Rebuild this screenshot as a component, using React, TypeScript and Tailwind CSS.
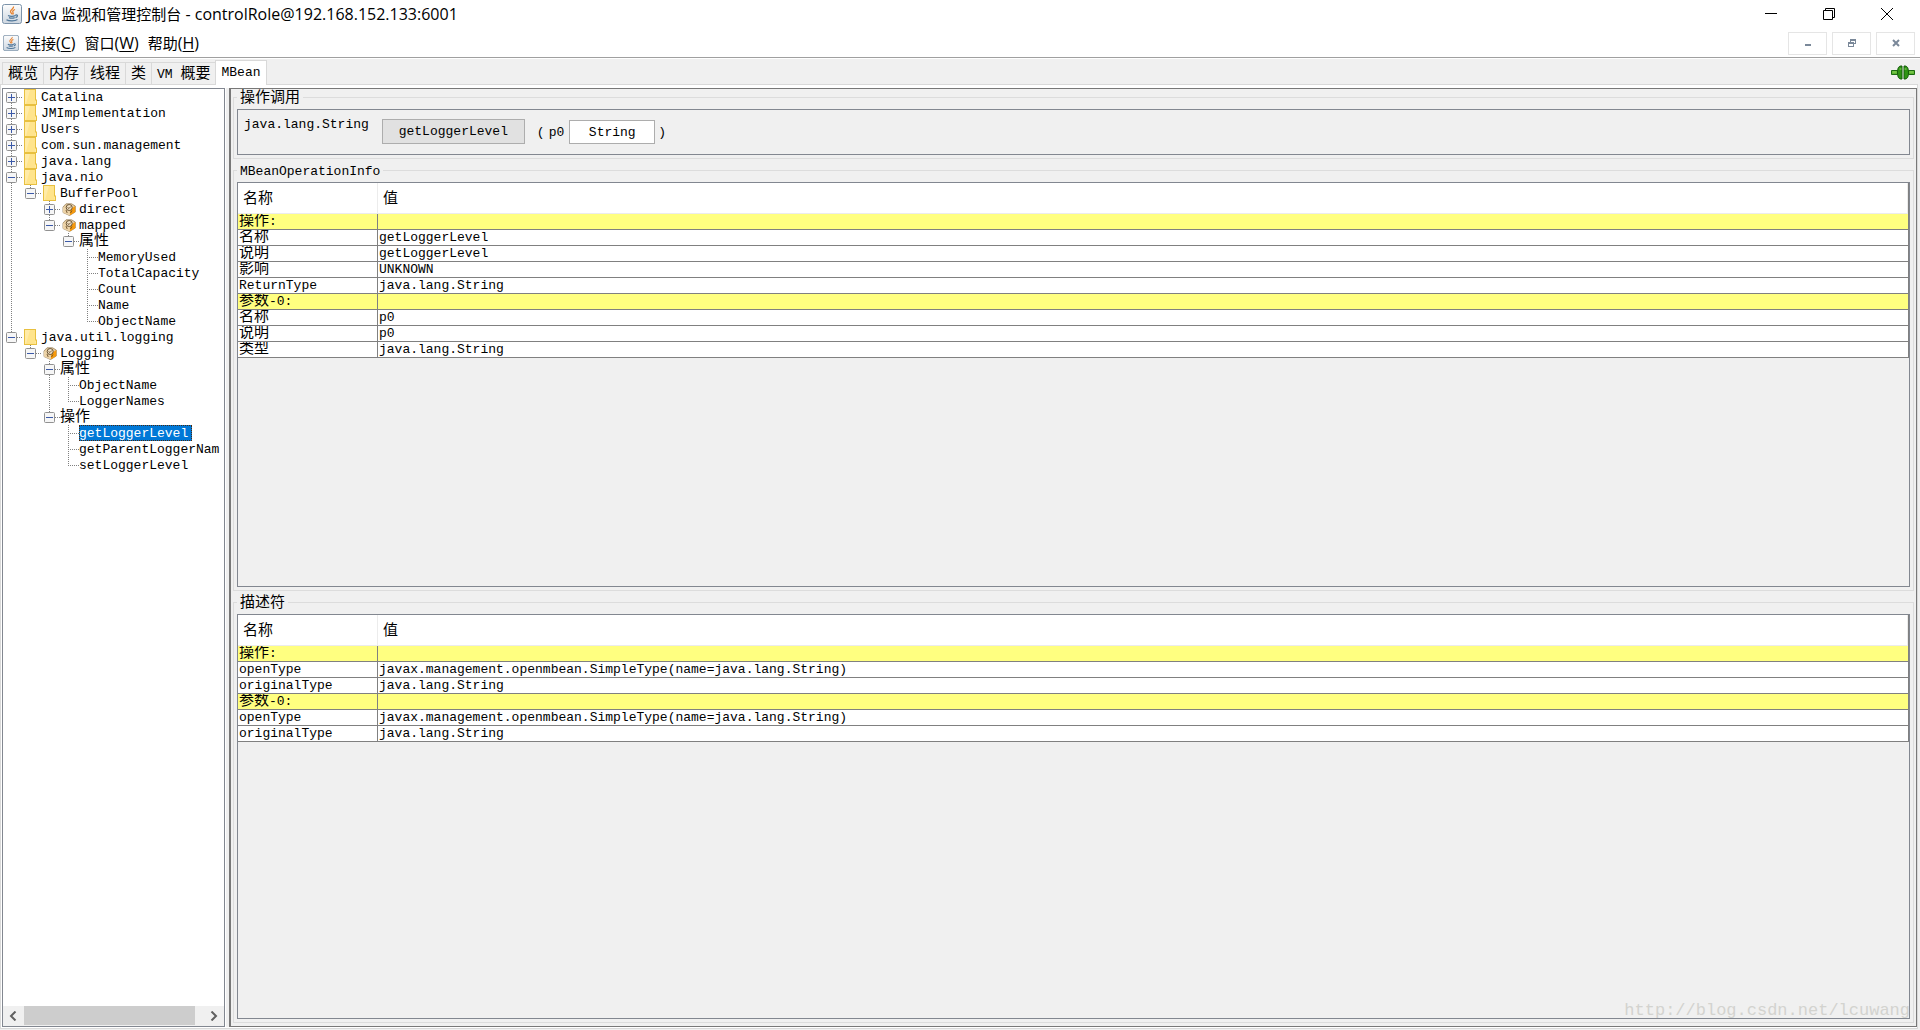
import { useState } from "react";
import { clsx } from "clsx";

type Kind = "folder" | "bean" | "plain";

interface TreeNode {
  id: string;
  label: string;
  kind?: Kind;
  children?: TreeNode[];
}

interface FlatNode {
  node: TreeNode;
  guides: boolean[];
  first: boolean;
  last: boolean;
}

interface Row { name: string; value?: string; heading?: boolean }

const MONO = "font-['Liberation_Mono','Noto_Sans_CJK_SC',monospace]";
const UI = "font-['Open_Sans','Noto_Sans_CJK_SC',sans-serif]";

const TREE: TreeNode[] = [
  { id: "catalina", label: "Catalina", kind: "folder", children: [] },
  { id: "jmi", label: "JMImplementation", kind: "folder", children: [] },
  { id: "users", label: "Users", kind: "folder", children: [] },
  { id: "mgmt", label: "com.sun.management", kind: "folder", children: [] },
  { id: "lang", label: "java.lang", kind: "folder", children: [] },
  {
    id: "nio", label: "java.nio", kind: "folder", children: [
      {
        id: "pool", label: "BufferPool", kind: "folder", children: [
          { id: "direct", label: "direct", kind: "bean", children: [] },
          {
            id: "mapped", label: "mapped", kind: "bean", children: [
              {
                id: "mapped-attrs", label: "属性", children: [
                  { id: "m1", label: "MemoryUsed" },
                  { id: "m2", label: "TotalCapacity" },
                  { id: "m3", label: "Count" },
                  { id: "m4", label: "Name" },
                  { id: "m5", label: "ObjectName" },
                ],
              },
            ],
          },
        ],
      },
    ],
  },
  {
    id: "jul", label: "java.util.logging", kind: "folder", children: [
      {
        id: "logging", label: "Logging", kind: "bean", children: [
          {
            id: "log-attrs", label: "属性", children: [
              { id: "l1", label: "ObjectName" },
              { id: "l2", label: "LoggerNames" },
            ],
          },
          {
            id: "log-ops", label: "操作", children: [
              { id: "getLevel", label: "getLoggerLevel" },
              { id: "getParent", label: "getParentLoggerNam" },
              { id: "setLevel", label: "setLoggerLevel" },
            ],
          },
        ],
      },
    ],
  },
];

const OPEN = ["nio", "pool", "mapped", "mapped-attrs", "jul", "logging", "log-attrs", "log-ops"];

const OPERATION_ROWS: Row[] = [
  { name: "操作:", heading: true },
  { name: "名称", value: "getLoggerLevel" },
  { name: "说明", value: "getLoggerLevel" },
  { name: "影响", value: "UNKNOWN" },
  { name: "ReturnType", value: "java.lang.String" },
  { name: "参数-0:", heading: true },
  { name: "名称", value: "p0" },
  { name: "说明", value: "p0" },
  { name: "类型", value: "java.lang.String" },
];

const DESCRIPTOR_ROWS: Row[] = [
  { name: "操作:", heading: true },
  { name: "openType", value: "javax.management.openmbean.SimpleType(name=java.lang.String)" },
  { name: "originalType", value: "java.lang.String" },
  { name: "参数-0:", heading: true },
  { name: "openType", value: "javax.management.openmbean.SimpleType(name=java.lang.String)" },
  { name: "originalType", value: "java.lang.String" },
];

const TABS = ["概览", "内存", "线程", "类", "VM 概要", "MBean"];
const MENUS = [
  { label: "连接", key: "C" },
  { label: "窗口", key: "W" },
  { label: "帮助", key: "H" },
];

function flatten(nodes: TreeNode[], open: string[], guides: boolean[] = []): FlatNode[] {
  return nodes.flatMap((node, i) => {
    const last = i === nodes.length - 1;
    const self = { node, guides, first: i === 0 && guides.length === 0, last };
    const below = node.children && open.includes(node.id) ? flatten(node.children, open, [...guides, !last]) : [];
    return [self, ...below];
  });
}

// Han characters are drawn larger than the Latin ones next to them
function Mixed({ text }: { text: string }) {
  return (
    <>
      {text.split(/([\u4e00-\u9fff]+)/).filter(Boolean).map((part, i) => (
        <span key={i} className={/[\u4e00-\u9fff]/.test(part) ? "text-[15px]" : "text-[13px]"}>{part}</span>
      ))}
    </>
  );
}

function JavaIcon({ size }: { size: number }) {
  return (
    <svg width={size} height={size} viewBox="0 0 20 20" className="shrink-0" aria-hidden="true">
      <defs>
        <linearGradient id={`java${size}`} x1="0" y1="0" x2="0" y2="1">
          <stop offset="0" stopColor="#fdfdfd" />
          <stop offset="1" stopColor="#cdd6e0" />
        </linearGradient>
      </defs>
      <rect x="0.5" y="0.5" width="19" height="19" rx="2" fill={`url(#java${size})`} stroke="#7c93aa" />
      <path d="M11.500 2.500c.8 2-3 3-3 5 0 1.200 1.200 1.800 1.500 2.800M13 5.500c-2 .8-2.800 1.800-2 3 .5.800.2 1.400-.4 1.900" fill="none" stroke="#e8812c" strokeWidth="1.300" />
      <path d="M6 11.500c2 .9 5.500.9 7.500 0M7 13.600c1.700.7 4 .7 5.700 0M13.500 11c2.600-.6 2.600 2 0 2.600M4.500 15.700c2.500 1.600 8.500 1.600 11-.2" fill="none" stroke="#4f7699" strokeWidth="1.300" />
    </svg>
  );
}

function FolderIcon() {
  return (
    <svg width="13" height="16" viewBox="0 0 13 16" aria-hidden="true">
      <path d="M0 0h12v10.500h1V16H0z" fill="#e8c040" />
      <path d="M1 1h10v14H1z" fill="#ffe48c" />
      <path d="M1 1h5L2 15H1z" fill="#ffeba8" />
      <path d="M11 11.500h1V15h-1z" fill="#ffe9a0" />
    </svg>
  );
}

function BeanIcon() {
  return (
    <svg width="14" height="13" viewBox="0 0 14 13" aria-hidden="true">
      <path d="M4 .8h5.500L13.300 3v6L7.500 12.500 1 9.500V4z" fill="#e9cfa2" stroke="#9b8565" strokeWidth=".8" />
      <path d="M8 6.500L13.300 3v6L8 12.300z" fill="#f79a0c" />
      <path d="M1 4l6 3v5.200L1 9.500z" fill="#ecd3a8" />
      <circle cx="7.200" cy="4.500" r="3" fill="#efe0c6" stroke="#5c4627" strokeWidth=".9" />
      <path d="M5.500 4.500l1.500 1 1.800-2M4 7l1.200 3M10 7.500L8.500 10" fill="none" stroke="#6d5028" strokeWidth=".9" />
    </svg>
  );
}

function Guide({ up, down, across }: { up?: boolean; down?: boolean; across?: boolean }) {
  return (
    <svg width="19" height="16" className="shrink-0" aria-hidden="true">
      <g stroke="#808080" strokeDasharray="1 1" shapeRendering="crispEdges">
        {up && <path d="M8.500 0v8" />}
        {down && <path d="M8.500 8v8" />}
        {across && <path d="M8 8.500h11" />}
      </g>
    </svg>
  );
}

function Expander({ open }: { open: boolean }) {
  return (
    <svg width="11" height="11" viewBox="0 0 11 11" aria-hidden="true">
      <rect x=".5" y=".5" width="10" height="10" rx="1" fill="#f6f6f6" stroke="#919191" />
      <path d={open ? "M2 5.500h7" : "M2 5.500h7M5.500 2v7"} stroke="#3c5aa8" shapeRendering="crispEdges" />
    </svg>
  );
}

function MBeanTree() {
  const [open, setOpen] = useState<string[]>(OPEN);
  const [selected, setSelected] = useState("getLevel");

  function toggle(id: string) {
    setOpen((prev) => (prev.includes(id) ? prev.filter((o) => o !== id) : [...prev, id]));
  }

  return (
    <div className="flex w-[223px] shrink-0 flex-col border border-[#828790] bg-white">
      <ul className="min-h-0 flex-1 overflow-hidden">
        {flatten(TREE, open).map(({ node, guides, first, last }) => (
          <li key={node.id} className="flex h-4 items-center whitespace-nowrap">
            {guides.map((line, i) => <Guide key={i} up={line} down={line} />)}
            <span className="relative h-4 w-[19px] shrink-0">
              <Guide up={!first} down={!last} across />
              {node.children && (
                <button
                  onClick={() => toggle(node.id)}
                  aria-label={node.label}
                  className="absolute top-[3px] left-[3px]"
                >
                  <Expander open={open.includes(node.id)} />
                </button>
              )}
            </span>
            {node.kind && (
              <span className="flex w-[19px] shrink-0 items-center pl-[2px]">
                {node.kind === "folder" ? <FolderIcon /> : <BeanIcon />}
              </span>
            )}
            <button
              onClick={() => setSelected(node.id)}
              className={clsx(
                "flex h-4 items-center pt-[2px] pr-1 leading-4",
                selected === node.id && "bg-[#0078d7] text-white outline-1 -outline-offset-1 outline-dotted outline-[#4a2a10]",
              )}
            >
              <Mixed text={node.label} />
            </button>
          </li>
        ))}
      </ul>
      <div className="flex h-5 shrink-0 bg-[#f0f0f0]">
        <button aria-label="向左滚动" className="flex w-[21px] items-center justify-center pr-[2px]">
          <svg width="8" height="10" viewBox="0 0 8 10"><path d="M6.500 .5L2 5l4.500 4.500" fill="none" stroke="#606060" strokeWidth="2" /></svg>
        </button>
        <div className="flex-1 pr-[8px]"><div className="h-[19px] bg-[#cdcdcd]" /></div>
        <button aria-label="向右滚动" className="flex w-[21px] items-center justify-center">
          <svg width="8" height="10" viewBox="0 0 8 10"><path d="M1.500 .5L6 5 1.500 9.500" fill="none" stroke="#606060" strokeWidth="2" /></svg>
        </button>
      </div>
    </div>
  );
}

function Titled({ title, grow, children }: { title: string; grow?: boolean; children: React.ReactNode }) {
  return (
    <fieldset className={clsx("flex min-h-0 min-w-0 flex-col border border-[#dcdcdc] px-[3px] pt-1 pb-[3px]", grow && "flex-1")}>
      <legend className="px-[3px]">
        <span className="flex h-4 items-center pt-1 leading-4"><Mixed text={title} /></span>
      </legend>
      {children}
    </fieldset>
  );
}

function InfoTable({ rows }: { rows: Row[] }) {
  return (
    <div className="min-h-0 flex-1 overflow-hidden border border-[#828790]">
      <table className="w-full table-fixed border-separate border-spacing-0 border-r border-[#808080] bg-white">
        <thead>
          <tr className="h-[31px] text-left text-[15px] leading-4">
            <th className="w-[140px] border-r border-b border-[#ececec] px-[5px] pt-1 pb-0 font-normal">名称</th>
            <th className="border-r border-b border-[#ececec] px-[5px] pt-1 pb-0 font-normal">值</th>
          </tr>
        </thead>
        <tbody>
          {rows.map((row, i) => (
            <tr key={i} className={clsx("h-4", row.heading && "bg-[#ffff80]")}>
              <td className="border-r border-b border-[#808080] p-0">
                <div className="flex h-[15px] items-center overflow-hidden pl-px leading-[15px]"><Mixed text={row.name} /></div>
              </td>
              <td className="border-b border-[#808080] p-0">
                <div className="flex h-[15px] items-center overflow-hidden pl-px leading-[15px]"><Mixed text={row.value ?? ""} /></div>
              </td>
            </tr>
          ))}
        </tbody>
      </table>
    </div>
  );
}

export default function App() {
  const [tab, setTab] = useState("MBean");
  const [param, setParam] = useState("String");

  return (
    <div className={clsx("relative flex h-screen flex-col overflow-hidden bg-[#f0f0f0] text-black", MONO)}>
      {/* Title bar */}
      <header className={clsx("flex h-[29px] shrink-0 items-center bg-white pb-[2px] pl-[2px] pr-1", UI)}>
        <JavaIcon size={20} />
        <h1 className="ml-[5px] flex-1 text-[16px] leading-5">
          Java <span className="text-[15px]">监视和管理控制台</span> - controlRole@192.168.152.133:6001
        </h1>
        <button aria-label="最小化" className="flex h-full w-[58px] items-center justify-center">
          <svg width="12" height="12"><path d="M0 5.500h12" stroke="#000" /></svg>
        </button>
        <button aria-label="还原" className="flex h-full w-[58px] items-center justify-center">
          <svg width="12" height="12" fill="none" stroke="#000"><path d="M.5 2.500h9v9h-9zM2.500 2.500v-2h9v9h-2" /></svg>
        </button>
        <button aria-label="关闭" className="flex h-full w-[58px] items-center justify-center">
          <svg width="12" height="12" stroke="#000"><path d="M0 0l12 12M12 0L0 12" /></svg>
        </button>
      </header>

      {/* Menu bar */}
      <div className={clsx("flex h-[29px] shrink-0 items-center border-b border-[#a0a0a0] bg-white pl-[3px] pr-[5px]", UI)}>
        <JavaIcon size={16} />
        <nav className="ml-[7px] flex flex-1 gap-[9px] text-[16px] leading-5">
          {MENUS.map((m) => (
            <button key={m.key}><span className="text-[15px]">{m.label}</span>(<u className="underline-offset-2">{m.key}</u>)</button>
          ))}
        </nav>
        <div className="flex gap-[5px]">
          <button aria-label="最小化窗口" className="flex h-[23px] w-[39px] items-center justify-center border border-[#e5e5e5]">
            <svg width="8" height="8"><path d="M1 5h6v2H1z" fill="#7a8899" /></svg>
          </button>
          <button aria-label="还原窗口" className="flex h-[23px] w-[39px] items-center justify-center border border-[#e5e5e5]">
            <svg width="8" height="8"><path d="M2 0h6v5H6V4h1V2H3v1H2zM0 3h6v5H0zM1 5v2h4V5z" fill="#7a8899" fillRule="evenodd" /></svg>
          </button>
          <button aria-label="关闭窗口" className="flex h-[23px] w-[39px] items-center justify-center border border-[#e5e5e5]">
            <svg width="8" height="8"><path d="M1 1l6 6M7 1L1 7" stroke="#7a8899" strokeWidth="2" /></svg>
          </button>
        </div>
      </div>

      {/* Tabs */}
      <div className="flex h-[26px] shrink-0 items-end border-t border-white pr-[5px] pl-[2px]">
        {TABS.map((t) => (
          <button
            key={t}
            onClick={() => setTab(t)}
            className={clsx(
              "flex items-center whitespace-pre border-t border-l border-[#d9d9d9] leading-4",
              tab === t ? "relative z-10 -mb-px h-[25px] border-r bg-white px-[5px]" : "h-[22px] px-[5px] pt-[2px]",
            )}
          >
            <Mixed text={t} />
          </button>
        ))}
        <svg width="24" height="15" viewBox="0 0 24 15" className="mb-1 ml-auto" aria-hidden="true">
          <path d="M.5 5.500h6v4h-6zM17.500 5.500h6v4h-6z" fill="#5cb531" stroke="#1c6b12" />
          <path d="M11 1v13c-3 .3-4.500-1.500-4.500-6.500S8 .7 11 1zM13 1v13c3 .3 4.500-1.500 4.500-6.500S16 .7 13 1z" fill="#2f9414" stroke="#145c0b" />
          <path d="M8.500 4h2M13.500 4h2M1.500 7h4M18.500 7h4" stroke="#8fd45f" />
        </svg>
      </div>

      {/* Content */}
      <main className="mr-[2px] mb-px flex min-h-0 flex-1 border border-[#d9d9d9] bg-white pt-[3px] pb-px pl-px">
        <MBeanTree />
        <div className="ml-px w-[3px] shrink-0 bg-[#f0f0f0]" />
        <div className="flex min-w-0 flex-1 flex-col gap-[3px] border border-l-2 border-[#787878] bg-[#f0f0f0] px-[2px] pb-[3px]">
          <Titled title="操作调用">
            <div className="flex h-[46px] items-start border border-[#828790] px-[6px] pt-[7px] text-[13px]">
              <span className="leading-4">java.lang.String</span>
              <button className="ml-[13px] mt-[2px] h-[25px] w-[143px] border border-[#adadad] bg-[#e1e1e1] leading-4">getLoggerLevel</button>
              <label htmlFor="p0" className="ml-3 mt-2 flex gap-1 leading-4"><span>(</span><span>p0</span></label>
              <input
                id="p0"
                value={param}
                onChange={(e) => setParam(e.target.value)}
                className="ml-[5px] mt-[3px] h-6 w-[86px] border border-[#adadad] bg-white text-center leading-4 outline-none"
              />
              <span className="ml-[3px] mt-2 leading-4">)</span>
            </div>
          </Titled>
          <Titled title="MBeanOperationInfo" grow><InfoTable rows={OPERATION_ROWS} /></Titled>
          <Titled title="描述符" grow><InfoTable rows={DESCRIPTOR_ROWS} /></Titled>
        </div>
      </main>

      <span className="pointer-events-none absolute right-[10px] bottom-[9px] text-[17px] leading-5 text-[#d3d3cf]">http://blog.csdn.net/lcuwang</span>
    </div>
  );
}
